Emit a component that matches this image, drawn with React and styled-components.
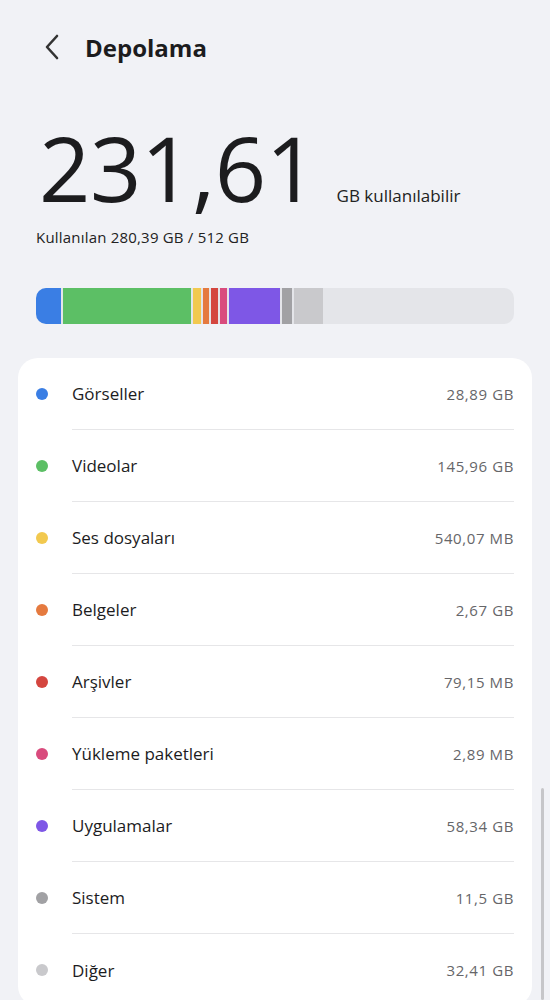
import React from 'react';
import styled, { createGlobalStyle } from 'styled-components';

const GlobalStyle = createGlobalStyle`
  html, body {
    margin: 0;
    padding: 0;
    background: #f1f2f6;
  }
  body {
    font-family: 'Open Sans', 'Noto Sans', sans-serif;
    color: #1c1c1e;
  }
`;

const Page = styled.div`
  width: 550px;
  height: 1000px;
  overflow: hidden;
  position: relative;
  background: #f1f2f6;
`;

const Header = styled.header`
  display: flex;
  align-items: center;
  height: 94px;
  padding-left: 40px;
  gap: 21px;
`;

const BackButton = styled.button`
  border: none;
  background: transparent;
  padding: 0;
  width: 24px;
  height: 30px;
  display: flex;
  align-items: center;
  justify-content: center;
  cursor: pointer;
`;

const Title = styled.h1`
  margin: 0;
  font-size: 24px;
  font-weight: 700;
  color: #1c1c1e;
`;

const Summary = styled.section`
  padding: 31px 36px 0 36px;
`;

const FreeRow = styled.div`
  display: flex;
  align-items: baseline;
  gap: 20px;
  padding-left: 3px;
`;

const BigNumber = styled.span`
  font-size: 90px;
  line-height: 84px;
  font-weight: 500;
  letter-spacing: -0.5px;
  color: #1c1c1e;
`;

const FreeLabel = styled.span`
  font-size: 17px;
  color: #222;
`;

const UsedText = styled.div`
  margin-top: 18px;
  font-size: 15px;
  color: #222;
  letter-spacing: 0.2px;
`;

const Bar = styled.div`
  margin-top: 41px;
  height: 36px;
  border-radius: 10px;
  background: #e4e5e9;
  display: flex;
  gap: 2px;
  overflow: hidden;
`;

const Segment = styled.div`
  height: 100%;
  flex: none;
  background: ${p => p.$color};
`;

const Card = styled.section`
  margin: 34px 18px 0 18px;
  background: #fff;
  border-radius: 20px;
  padding: 0 18px 0 0;
`;

const Row = styled.div`
  display: flex;
  align-items: center;
  height: 72px;
`;

const Dot = styled.span`
  width: 12px;
  height: 12px;
  border-radius: 50%;
  background: ${p => p.$color};
  margin: 0 24px 0 18px;
  flex: none;
`;

const RowBody = styled.div`
  flex: 1;
  height: 100%;
  display: flex;
  align-items: center;
  justify-content: space-between;
  border-bottom: ${p => (p.$last ? 'none' : '1px solid #e6e6e8')};
  box-sizing: border-box;
`;

const Label = styled.span`
  font-size: 17px;
  color: #1c1c1e;
`;

const Value = styled.span`
  font-size: 15px;
  color: #666669;
  letter-spacing: 0.6px;
`;

const Scrollbar = styled.div`
  position: absolute;
  right: 6px;
  top: 788px;
  width: 3px;
  height: 212px;
  border-radius: 2px;
  background: #c6c6c9;
`;

const segments = [
  { color: '#3a7ee4', width: 25 },
  { color: '#5cbf65', width: 128 },
  { color: '#f2c94f', width: 8 },
  { color: '#e57a3f', width: 6 },
  { color: '#d4463f', width: 7 },
  { color: '#d94b7d', width: 7 },
  { color: '#7e57e6', width: 51 },
  { color: '#a1a1a4', width: 10 },
  { color: '#c9c9cc', width: 29 },
];

const items = [
  { name: 'Görseller', value: '28,89 GB', color: '#3a7ee4' },
  { name: 'Videolar', value: '145,96 GB', color: '#5cbf65' },
  { name: 'Ses dosyaları', value: '540,07 MB', color: '#f2c94f' },
  { name: 'Belgeler', value: '2,67 GB', color: '#e57a3f' },
  { name: 'Arşivler', value: '79,15 MB', color: '#d4463f' },
  { name: 'Yükleme paketleri', value: '2,89 MB', color: '#d94b7d' },
  { name: 'Uygulamalar', value: '58,34 GB', color: '#7e57e6' },
  { name: 'Sistem', value: '11,5 GB', color: '#a1a1a4' },
  { name: 'Diğer', value: '32,41 GB', color: '#c9c9cc' },
];

const App = () => {
  return (
    <Page>
      <GlobalStyle />
      <Header>
        <BackButton aria-label="Geri">
          <svg width="18" height="28" viewBox="0 0 18 28" fill="none">
            <path d="M14 3 L4 14 L14 25" stroke="#333" strokeWidth="2.6" strokeLinecap="round" strokeLinejoin="round" />
          </svg>
        </BackButton>
        <Title>Depolama</Title>
      </Header>

      <Summary>
        <FreeRow>
          <BigNumber>231,61</BigNumber>
          <FreeLabel>GB kullanılabilir</FreeLabel>
        </FreeRow>
        <UsedText>Kullanılan 280,39 GB / 512 GB</UsedText>
        <Bar>
          {segments.map((s, i) => (
            <Segment key={i} $color={s.color} style={{ width: s.width }} />
          ))}
        </Bar>
      </Summary>

      <Card>
        {items.map((it, i) => (
          <Row key={it.name}>
            <Dot $color={it.color} />
            <RowBody $last={i === items.length - 1}>
              <Label>{it.name}</Label>
              <Value>{it.value}</Value>
            </RowBody>
          </Row>
        ))}
      </Card>
      <Scrollbar />
    </Page>
  );
};

export default App;
